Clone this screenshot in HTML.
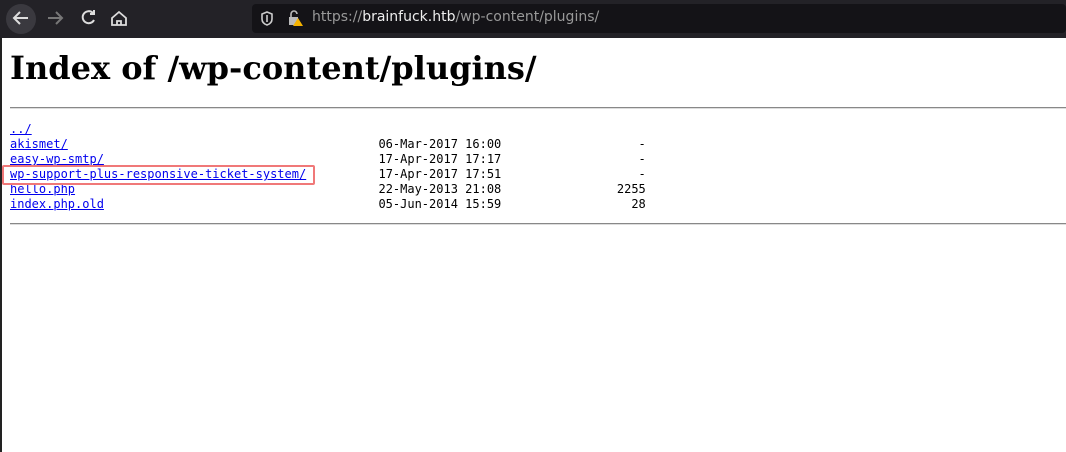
<!DOCTYPE html>
<html><head><style>
body{margin:0;width:1066px;height:452px;overflow:hidden;background:#fff;position:relative}
.bar{position:absolute;left:0;top:0;width:1066px;height:38px;background:#232227}
.url{position:absolute;left:252px;top:4px;width:814px;height:29px;background:#141317;border-radius:4px}
.page{position:absolute;left:0;top:38px;right:0;bottom:0;border-left:2px solid #222}
h1{font-family:"DejaVu Serif",serif;font-weight:bold;font-size:32px;margin:0;position:absolute;left:8px;top:11px;white-space:nowrap;color:#000}
hr{position:absolute;left:8px;right:0;margin:0;border:0;border-top:1px solid #888;border-bottom:1px solid #ddd;height:0}
pre{position:absolute;left:8px;top:84px;margin:0;font-family:"DejaVu Sans Mono",monospace;font-size:12px;line-height:15px;color:#000}
a{color:#0000ee}
.box{position:absolute;width:309px;height:16px;border:2px solid #f07878;border-radius:2px}
</style></head><body>
<div class="bar">
 <div style="position:absolute;left:6px;top:4px;width:30px;height:30px;border-radius:50%;background:#3a393f"></div>
 <svg style="position:absolute;left:0;top:0" width="140" height="38" fill="none" stroke-width="2">
  <path d="M28 18H14M20 12l-6 6 6 6" stroke="#ddd"/>
  <path d="M62 18H48M56 12l6 6-6 6" stroke="#777"/>
  <path d="M93 13a6 6 0 1 0 1 7M94 10v4h-4" stroke="#ddd"/>
  <path d="M112 18l7-6 7 6v7h-14z M117 25v-4h4v4" stroke="#ddd" stroke-width="1.8"/>
 </svg>
 <div class="url">
  <svg style="position:absolute;left:8px;top:7px" width="14" height="15" fill="none" stroke="#ccc" stroke-width="1.6"><path d="M7 1l5 2v5c0 3-2 5-5 6-3-1-5-3-5-6V3z"/><path d="M7 4v7"/></svg>
  <svg style="position:absolute;left:36px;top:6px" width="16" height="17"><rect x="1" y="7" width="9" height="8" fill="#bbb"/><path d="M3 7V4a3 3 0 0 1 6 0" stroke="#bbb" fill="none" stroke-width="1.6"/><path d="M10 8l5 8H5z" fill="#f5b301"/></svg>
  <span style="position:absolute;left:60px;top:5px;font-family:'DejaVu Sans',sans-serif;font-size:14px;color:#999;white-space:nowrap">https://<span style="color:#eee">brainfuck.htb</span>/wp-content/plugins/</span>
 </div>
</div>
<div class="page">
<h1>Index of /wp-content/plugins/</h1>
<hr style="top:69px">
<pre><a href="#">../</a>
<a href="#">akismet/</a>                                           06-Mar-2017 16:00                   -
<a href="#">easy-wp-smtp/</a>                                      17-Apr-2017 17:17                   -
<a href="#">wp-support-plus-responsive-ticket-system/</a>          17-Apr-2017 17:51                   -
<a href="#">hello.php</a>                                          22-May-2013 21:08                2255
<a href="#">index.php.old</a>                                      05-Jun-2014 15:59                  28
</pre>
<hr style="top:185px">
<div class="box" style="left:0px;top:127px"></div>
</div>
</body></html>
